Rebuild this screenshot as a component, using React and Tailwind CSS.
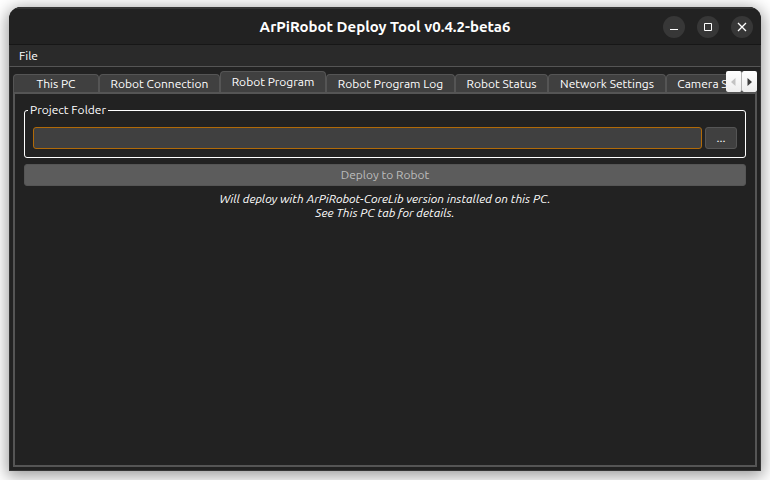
import { useState } from "react";

const TABS = [
  { name: "This PC", width: "w-[86px]" },
  { name: "Robot Connection", width: "w-[121px]" },
  { name: "Robot Program", width: "w-[106px]" },
  { name: "Robot Program Log", width: "w-[129px]" },
  { name: "Robot Status", width: "w-[93px]" },
  { name: "Network Settings", width: "w-[118px]" },
  { name: "Camera Streaming", width: "w-[122px]" },
];

function WindowButton({ label, children }) {
  return (
    <button
      type="button"
      aria-label={label}
      className="flex size-[22px] items-center justify-center rounded-full bg-[#373737] text-white"
    >
      <svg width="22" height="22" viewBox="0 0 22 22" fill="none" stroke="currentColor">
        {children}
      </svg>
    </button>
  );
}

function TitleBar() {
  return (
    <header className="grid h-[38px] grid-cols-[1fr_auto_1fr] items-center border-t-2 border-b border-t-[#343434] border-b-[#171717] bg-[#222222] px-2">
      <span />
      <h1 className="text-[15px] leading-5 font-bold text-white">ArPiRobot Deploy Tool v0.4.2-beta6</h1>
      <div className="flex justify-end gap-3">
        <WindowButton label="Minimize">
          <path d="M7 13.5h8" />
        </WindowButton>
        <WindowButton label="Maximize">
          <path d="M7.5 7.5h7v7h-7z" />
        </WindowButton>
        <WindowButton label="Close">
          <path d="M7 7l8 8M15 7l-8 8" strokeWidth="1.3" />
        </WindowButton>
      </div>
    </header>
  );
}

function TabBar({ active, onSelect }) {
  return (
    <div className="flex h-[21px]">
      <div role="tablist" className="flex min-w-0 flex-1 items-end overflow-hidden">
        {TABS.map(({ name, width }) => {
          const selected = name === active;
          return (
            <button
              key={name}
              type="button"
              role="tab"
              aria-selected={selected}
              onClick={() => onSelect(name)}
              className={`${width} ${selected ? "h-[21px]" : "h-[18px]"} flex shrink-0 items-center justify-center rounded-t-[4px] border border-b-0 border-[#555555] bg-[#404040] whitespace-nowrap`}
            >
              {name}
            </button>
          );
        })}
      </div>
      <div className="flex shrink-0">
        <button
          type="button"
          aria-label="Scroll tabs left"
          disabled
          className="flex w-4 items-center justify-center rounded-[2px] border-r border-[#b4b4b4] bg-linear-to-b from-white to-[#ededed]"
        >
          <svg width="5" height="8" viewBox="0 0 5 8" fill="#c3c3c3">
            <path d="M4.5 0v8L0 4z" />
          </svg>
        </button>
        <button
          type="button"
          aria-label="Scroll tabs right"
          className="flex w-[15px] items-center justify-center rounded-[2px] bg-linear-to-b from-white to-[#ededed]"
        >
          <svg width="5" height="8" viewBox="0 0 5 8" fill="#3c3c3c">
            <path d="M0.5 0v8L5 4z" />
          </svg>
        </button>
      </div>
    </div>
  );
}

function ProgramPanel() {
  return (
    <main role="tabpanel" className="flex flex-1 flex-col border-2 border-[#555555] px-[9px] pt-2">
      <fieldset className="min-w-0 rounded-[3px] border border-white px-2 pb-2">
        <legend className="-ml-[5px] px-[2px] leading-4">
          <label htmlFor="folder">Project Folder</label>
        </legend>
        <div className="flex gap-[3px] pt-[9px]">
          <input
            id="folder"
            type="text"
            className="h-[22px] min-w-0 flex-1 rounded-[3px] border border-[#b16a08] bg-[#404040] px-1 text-white outline-none"
          />
          <button
            type="button"
            aria-label="Browse for project folder"
            className="h-[22px] w-8 rounded-[3px] border border-[#555555] bg-[#404040] leading-4"
          >
            ...
          </button>
        </div>
      </fieldset>
      <button
        type="button"
        disabled
        className="mt-[6px] h-[22px] rounded-[3px] border border-[#555555] bg-[#5c5c5c] leading-4 text-[#bebebe]"
      >
        Deploy to Robot
      </button>
      <p className="mt-[6px] text-center leading-[14px] italic">
        Will deploy with ArPiRobot-CoreLib version installed on this PC.
        <br />
        See This PC tab for details.
      </p>
    </main>
  );
}

export default function App() {
  const [active, setActive] = useState("Robot Program");
  return (
    <div className="flex min-h-screen flex-col bg-white px-[9px] pt-[7px] pb-[9px] font-['Ubuntu','Noto_Sans',sans-serif] text-[12px] text-white">
      <div className="flex flex-1 flex-col overflow-hidden rounded-t-[12px] bg-[#222222] shadow-[0_3px_16px_2px_rgba(0,0,0,0.4)]">
        <TitleBar />
        <nav className="flex h-[22px] items-center border-x border-b border-x-[#343434] border-b-[#555555] bg-[#2a2a2a] px-[9px]">
          <button type="button" className="leading-4">
            File
          </button>
        </nav>
        <div className="flex flex-1 flex-col border border-t-0 border-[#343434] px-[3px] pt-1 pb-[3px]">
          <TabBar active={active} onSelect={setActive} />
          <ProgramPanel />
        </div>
      </div>
    </div>
  );
}
